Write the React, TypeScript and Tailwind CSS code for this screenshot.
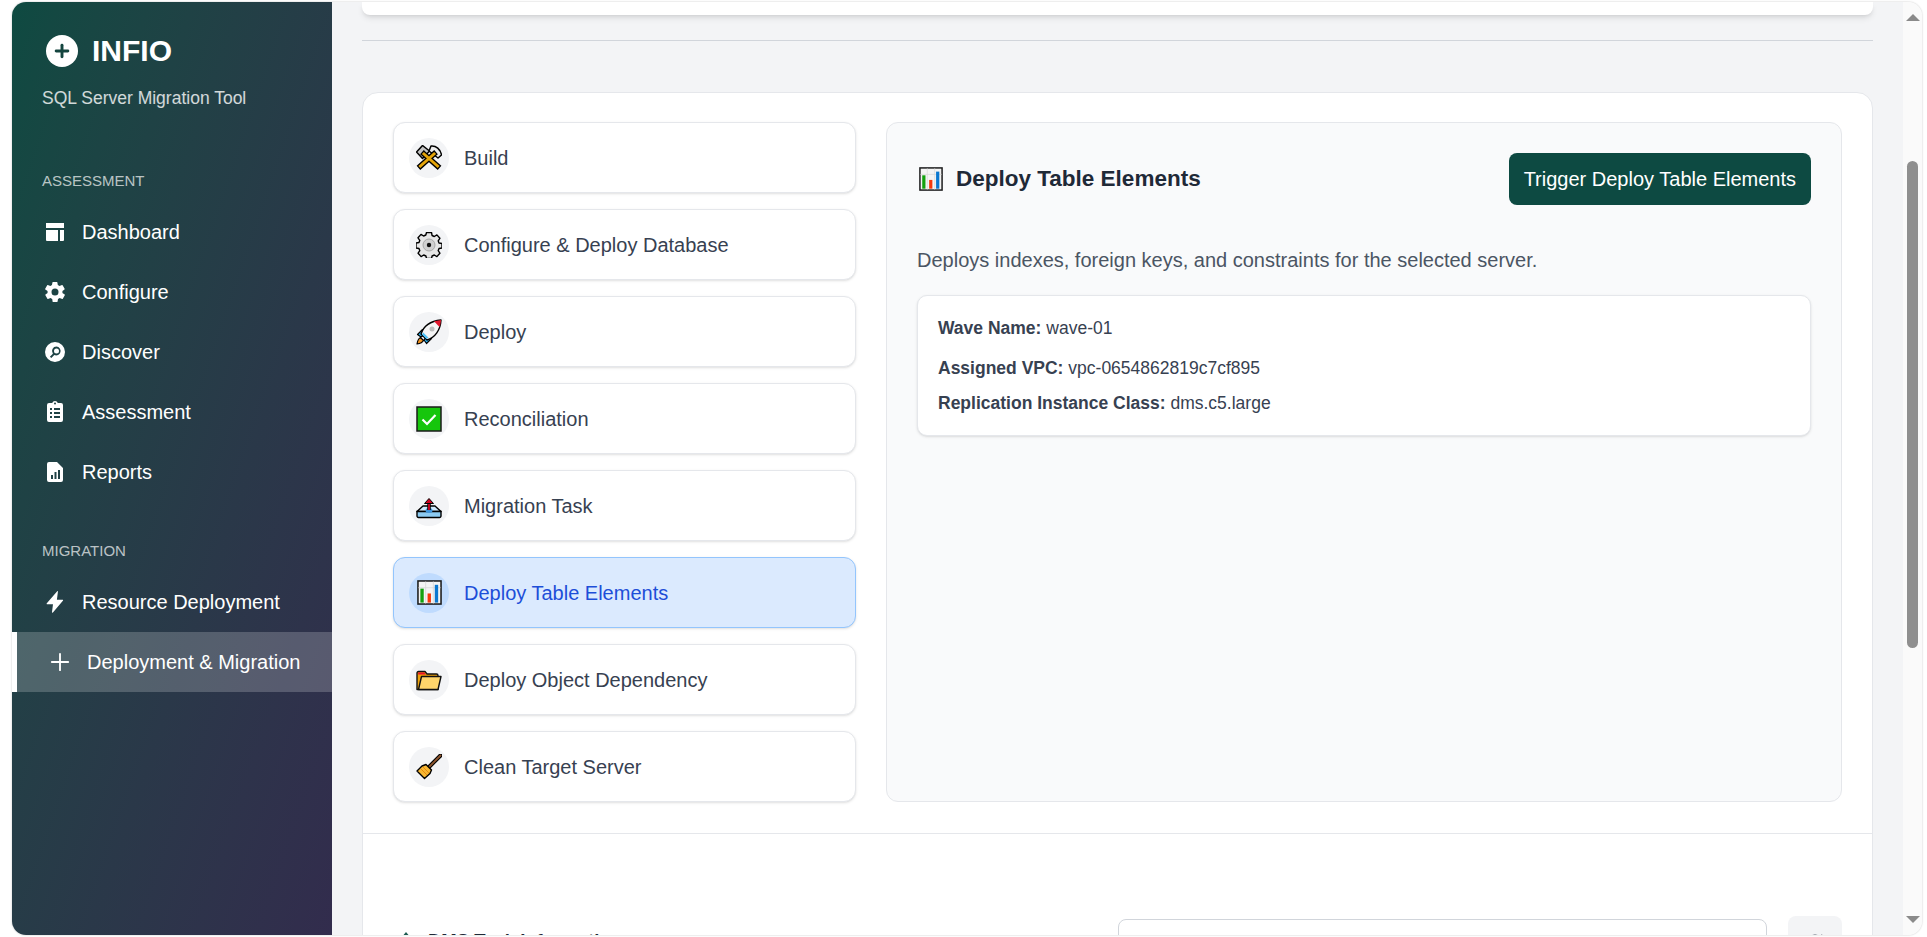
import { Plus, RefreshCw } from 'lucide-react';
import type { ReactNode } from 'react';

const sans = { fontFamily: '"Liberation Sans", Arial, sans-serif' };

function DashIcon() {
  return (
    <svg viewBox="0 0 24 24" className="h-6 w-6" fill="white">
      <path d="M3 3h18v5H3zM3 10h12v11H4a1 1 0 0 1-1-1zM17 10h4v10a1 1 0 0 1-1 1h-3z" />
    </svg>
  );
}

function GearIcon() {
  return (
    <svg viewBox="0 0 24 24" className="h-6 w-6" fill="white">
      <path fillRule="evenodd" d="M19.4 13a7.6 7.6 0 0 0 0-2l2.1-1.6a.5.5 0 0 0 .1-.7l-2-3.4a.5.5 0 0 0-.6-.2l-2.5 1a7.3 7.3 0 0 0-1.7-1l-.4-2.6a.5.5 0 0 0-.5-.5h-4a.5.5 0 0 0-.5.4l-.4 2.7a7.3 7.3 0 0 0-1.7 1l-2.5-1a.5.5 0 0 0-.6.2l-2 3.4a.5.5 0 0 0 .1.7L4.6 11a7.6 7.6 0 0 0 0 2l-2.1 1.6a.5.5 0 0 0-.1.7l2 3.4a.5.5 0 0 0 .6.2l2.5-1a7.3 7.3 0 0 0 1.7 1l.4 2.6a.5.5 0 0 0 .5.5h4a.5.5 0 0 0 .5-.4l.4-2.7a7.3 7.3 0 0 0 1.7-1l2.5 1a.5.5 0 0 0 .6-.2l2-3.4a.5.5 0 0 0-.1-.7zM12 15.5a3.5 3.5 0 1 1 0-7 3.5 3.5 0 0 1 0 7z" />
    </svg>
  );
}

function DiscoverIcon() {
  return (
    <svg viewBox="0 0 24 24" className="h-6 w-6" fill="white">
      <path fillRule="evenodd" d="M12 2a10 10 0 1 1 0 20 10 10 0 0 1 0-20zm1.5 4.5a4.5 4.5 0 0 0-3.6 7.2l-3 3 1.4 1.4 3-3a4.5 4.5 0 1 0 2.2-8.6zm0 2a2.5 2.5 0 1 1 0 5 2.5 2.5 0 0 1 0-5z" />
    </svg>
  );
}

function ClipboardIcon() {
  return (
    <svg viewBox="0 0 24 24" className="h-6 w-6" fill="white">
      <path fillRule="evenodd" d="M18 3h-3.200a3 3 0 0 0-5.600 0H6a2 2 0 0 0-2 2v15a2 2 0 0 0 2 2h12a2 2 0 0 0 2-2V5a2 2 0 0 0-2-2zm-6-.5a1 1 0 1 1 0 2 1 1 0 0 1 0-2zM7 8h2v2H7zm4 0h6v2h-6zm-4 4h2v2H7zm4 0h6v2h-6zm-4 4h2v2H7zm4 0h6v2h-6z" />
    </svg>
  );
}

function ReportIcon() {
  return (
    <svg viewBox="0 0 24 24" className="h-6 w-6" fill="white">
      <path fillRule="evenodd" d="M6 2h8l6 6v12a2 2 0 0 1-2 2H6a2 2 0 0 1-2-2V4a2 2 0 0 1 2-2zm2 13v4h2v-4zm3.500-3v7h2v-7zm3.500-2v9h2v-9z" />
    </svg>
  );
}

function BoltIcon() {
  return (
    <svg viewBox="0 0 24 24" className="h-6 w-6" fill="white">
      <path d="M14 1.500 3.800 13.200c-.4.500-.1 1 .5 1h5.700L9 22c-.1.700.5.900.9.400l10-11.600c.4-.5.100-1-.5-1h-5.500l1-8c.1-.7-.5-1-.9-.3z" />
    </svg>
  );
}

function BuildEmoji() {
  return (
    <svg viewBox="0 0 26 26" className="h-[26px] w-[26px]">
      <path d="M.5 7 6.500.5l7 5.500-7 7.500z" fill="#c4c4c4" stroke="#000" strokeWidth="1.500" strokeLinejoin="round" />
      <path d="M15 1c5-.5 9.500 3 10.500 9l-3.500 3-9-7z" fill="#eeeeee" stroke="#000" strokeWidth="1.500" strokeLinejoin="round" />
      <path d="M8 9 21.500 21" stroke="#000" strokeWidth="5.500" strokeLinecap="square" />
      <path d="M18 9 4.500 21" stroke="#000" strokeWidth="5.500" strokeLinecap="square" />
      <path d="M8 9 21.500 21" stroke="#e5a50a" strokeWidth="3" strokeLinecap="square" />
      <path d="M18 9 4.500 21" stroke="#e5a50a" strokeWidth="3" strokeLinecap="square" />
    </svg>
  );
}

function GearEmoji() {
  return (
    <svg viewBox="0 0 26 26" className="h-[26px] w-[26px]">
      <path d="M10.500 1h5l.6 3 2.200 1 2.600-1.600 3 3.400-1.700 2.500.8 2.200 3 .5v4.500l-3 .5-.8 2.200 1.700 2.500-3 3.400-2.600-1.600-2.200 1-.6 2.500h-5l-.6-2.500-2.200-1-2.600 1.600-3-3.400 1.700-2.500-.8-2.200-3-.5V11.500l3-.5.800-2.200L2 6.300l3-3.400L7.600 4.500l2.200-1z" transform="translate(0 -.5)" fill="#e6e6e6" stroke="#000" strokeWidth="1.400" strokeLinejoin="round" />
      <circle cx="13" cy="13" r="6" fill="#d0d0d0" stroke="#a8a8a8" />
      <circle cx="13" cy="13" r="2.200" fill="#111" />
    </svg>
  );
}

function RocketEmoji() {
  return (
    <svg viewBox="0 0 26 26" className="h-[26px] w-[26px]">
      <path d="M1 25c.5-3 1.500-5.500 3.500-6.500l3 3C6.500 23.500 4 24.500 1 25z" fill="#f7941d" stroke="#000" strokeWidth="1.200" strokeLinejoin="round" />
      <path d="M6.500 10.500 1.500 15.500l3.500 2.500 3-2zM15.500 19.500l-5 5-2.500-3.500 2-3z" fill="#29b6f6" stroke="#000" strokeWidth="1.200" strokeLinejoin="round" />
      <path d="M5 15C7.500 7 15 2 25 1c-.5 10-6 17.500-14 20z" fill="#f5f5f5" stroke="#000" strokeWidth="1.400" strokeLinejoin="round" />
      <path d="M18 2.300 25 1c-.2 2.500-.7 5-1.500 7z" fill="#e0162b" />
      <path d="m6 15.500 4.500 4.500 2-1.200-5.300-5.300z" fill="#4fc3f7" />
      <circle cx="16" cy="10" r="2.500" fill="#bdbdbd" />
    </svg>
  );
}

function CheckEmoji() {
  return (
    <svg viewBox="0 0 26 26" className="h-[26px] w-[26px]">
      <rect x="1" y="1" width="24" height="24" fill="#16c60c" stroke="#1a1a1a" strokeWidth="1.500" />
      <path d="m6.500 13.500 4.500 4.500 8.500-9" fill="none" stroke="#fff" strokeWidth="2.200" />
    </svg>
  );
}

function OutboxEmoji() {
  return (
    <svg viewBox="0 0 26 26" className="h-[26px] w-[26px]">
      <path d="M7 13h12l6 5.500H1z" fill="#cfe8fa" stroke="#000" strokeWidth="1.400" strokeLinejoin="round" />
      <path d="M1 18.500h24V23a1.500 1.500 0 0 1-1.500 1.500h-21A1.500 1.500 0 0 1 1 23z" fill="#8ccbf2" stroke="#000" strokeWidth="1.400" />
      <ellipse cx="13" cy="17.500" rx="3.500" ry="2.500" fill="#3f95dc" />
      <path d="M13 17V10" stroke="#000" strokeWidth="3.500" />
      <path d="M13 17V10" stroke="#d2001e" strokeWidth="1.800" />
      <path d="m13 5.500 4.500 5h-9z" fill="#d2001e" stroke="#000" strokeWidth="1" />
    </svg>
  );
}

function ChartEmoji({ small }: { small?: boolean }) {
  return (
    <svg viewBox="0 0 26 26" className={small ? 'h-6 w-6' : 'h-[25px] w-[25px]'}>
      <rect x="1" y="1" width="24" height="24" fill="#f4f4f4" stroke="#1a1a1a" strokeWidth="1.600" />
      <path d="M1.500 8h23M9 1.500v23M17 1.500v23" stroke="#d8d8d8" strokeWidth=".8" />
      <rect x="3.500" y="9" width="3.500" height="14.500" fill="#13a10e" />
      <rect x="11" y="14" width="3.500" height="9.500" fill="#f7390b" />
      <rect x="18.500" y="5" width="3.500" height="18.500" fill="#0b78d0" />
    </svg>
  );
}

function FolderEmoji() {
  return (
    <svg viewBox="0 0 26 26" className="h-[26px] w-[26px]">
      <path d="M1 6a1.500 1.500 0 0 1 1.500-1.500h6.500l2 2.500h9.500a1.500 1.500 0 0 1 1.500 1.500V22.500H1z" fill="#f0a30a" stroke="#111" strokeWidth="1.400" strokeLinejoin="round" />
      <path d="M2.200 5.500h6.300l1.300 2H2.200z" fill="#e8112d" />
      <path d="M5.500 9.500H25l-3 13H2.500z" fill="#ffd56b" stroke="#111" strokeWidth="1.400" strokeLinejoin="round" />
    </svg>
  );
}

function BroomEmoji() {
  return (
    <svg viewBox="0 0 26 26" className="h-[26px] w-[26px]">
      <path d="M24.500 1.500 13 13" stroke="#000" strokeWidth="4" strokeLinecap="round" />
      <path d="M24.500 1.500 13 13" stroke="#8e562e" strokeWidth="1.800" strokeLinecap="round" />
      <path d="m10 10.500 5.500 5.500-1.500 3.500L8.500 24.500 1 17l5-5z" fill="#f7b733" stroke="#000" strokeWidth="1.400" strokeLinejoin="round" />
      <path d="m7 13 6 6M5 15l6 6" stroke="#e8890c" strokeWidth="1" />
    </svg>
  );
}

const assessmentLinks: { label: string; icon: ReactNode }[] = [
  { label: 'Dashboard', icon: <DashIcon /> },
  { label: 'Configure', icon: <GearIcon /> },
  { label: 'Discover', icon: <DiscoverIcon /> },
  { label: 'Assessment', icon: <ClipboardIcon /> },
  { label: 'Reports', icon: <ReportIcon /> },
];

const steps: { label: string; icon: ReactNode; active?: boolean }[] = [
  { label: 'Build', icon: <BuildEmoji /> },
  { label: 'Configure & Deploy Database', icon: <GearEmoji /> },
  { label: 'Deploy', icon: <RocketEmoji /> },
  { label: 'Reconciliation', icon: <CheckEmoji /> },
  { label: 'Migration Task', icon: <OutboxEmoji /> },
  { label: 'Deploy Table Elements', icon: <ChartEmoji />, active: true },
  { label: 'Deploy Object Dependency', icon: <FolderEmoji /> },
  { label: 'Clean Target Server', icon: <BroomEmoji /> },
];

function SideLink({ label, icon }: { label: string; icon: ReactNode }) {
  return (
    <div className="flex h-[60px] items-center gap-[15px] pl-[31px] text-[20px] text-white">
      <span className="flex w-[24px] justify-center">{icon}</span>
      {label}
    </div>
  );
}

function Sidebar() {
  return (
    <aside className="flex h-full w-[320px] shrink-0 flex-col rounded-l-[14px] bg-gradient-to-br from-[#0e4a41] to-[#322c4d]">
      <div className="px-[30px] pt-[32px]">
        <div className="flex items-center gap-[14px] pl-[4px]">
          <span className="flex h-[32px] w-[32px] items-center justify-center rounded-full bg-white">
            <Plus size={20} strokeWidth={3.5} color="#14453f" />
          </span>
          <span className="text-[30px] leading-[34px] font-bold text-white">INFIO</span>
        </div>
        <p className="mt-[18px] text-[17.500px] leading-[24px] text-white/80">SQL Server Migration Tool</p>
      </div>
      <p className="mt-[61px] pl-[30px] text-[15px] leading-[20px] text-white/70">ASSESSMENT</p>
      <nav className="mt-[11px]">
        {assessmentLinks.map((link) => (
          <SideLink key={link.label} {...link} />
        ))}
      </nav>
      <p className="mt-[39px] pl-[30px] text-[15px] leading-[20px] text-white/70">MIGRATION</p>
      <nav className="mt-[11px]">
        <SideLink label="Resource Deployment" icon={<BoltIcon />} />
        <div className="flex h-[60px] items-center gap-[15px] border-l-[5px] border-white bg-white/20 pl-[31px] text-[20px] text-white">
          <span className="flex w-[24px] justify-center">
            <Plus size={28} strokeWidth={1.6} className="shrink-0" />
          </span>
          Deployment &amp; Migration
        </div>
      </nav>
    </aside>
  );
}

function StepButton({ label, icon, active }: { label: string; icon: ReactNode; active?: boolean }) {
  return (
    <button
      className={
        active
          ? 'flex h-[71px] items-center gap-[15px] rounded-[12px] border border-[#93c5fd] bg-[#dbeafe] px-[15px] text-left text-[20px] text-[#1d4ed8] shadow-sm'
          : 'flex h-[71px] items-center gap-[15px] rounded-[12px] border border-[#e5e7eb] bg-white px-[15px] text-left text-[20px] text-[#374151] shadow-sm'
      }
    >
      <span
        className={
          active
            ? 'flex h-[40px] w-[40px] items-center justify-center rounded-full bg-[#bfdbfe]'
            : 'flex h-[40px] w-[40px] items-center justify-center rounded-full bg-[#f3f4f6]'
        }
      >
        {icon}
      </span>
      {label}
    </button>
  );
}

function DetailPanel() {
  return (
    <section className="flex-1 rounded-[12px] border border-[#e5e7eb] bg-[#f9fafb] px-[30px] pt-[30px]">
      <div className="flex items-center justify-between">
        <h2 className="flex items-center gap-[13px] pl-[2px] text-[22.500px] font-bold text-[#1f2937]">
          <ChartEmoji small />
          Deploy Table Elements
        </h2>
        <button className="h-[52px] rounded-[8px] bg-[#0d4a42] px-[15px] text-[20px] text-white">
          Trigger Deploy Table Elements
        </button>
      </div>
      <p className="mt-[43px] text-[20px] leading-[24px] text-[#4b5563]">
        Deploys indexes, foreign keys, and constraints for the selected server.
      </p>
      <div className="mt-[23px] h-[141px] rounded-[10px] border border-[#e5e7eb] bg-white px-[20px] pt-[20px] text-[17.500px] text-[#374151] shadow-sm">
        <p className="leading-[24px]">
          <strong>Wave Name:</strong> wave-01
        </p>
        <p className="mt-[16px] leading-[24px]">
          <strong>Assigned VPC:</strong> vpc-0654862819c7cf895
        </p>
        <p className="mt-[11px] leading-[24px]">
          <strong>Replication Instance Class:</strong> dms.c5.large
        </p>
      </div>
    </section>
  );
}

function ScrollBar() {
  return (
    <div className="flex h-full w-[19px] shrink-0 flex-col items-center rounded-r-[14px] bg-[#fafafa] pt-[12px]">
      <span className="h-0 w-0 border-x-[7px] border-b-[7px] border-x-transparent border-b-[#8a8a8a]" />
      <span className="mt-[140px] h-[487px] w-[11px] rounded-full bg-[#8f8f8f]" />
      <span className="mt-auto mb-[12px] h-0 w-0 border-x-[7px] border-t-[7px] border-x-transparent border-t-[#8a8a8a]" />
    </div>
  );
}

export default function App() {
  return (
    <div className="h-[937px] w-full overflow-hidden bg-white pt-[2px] pb-[2px] pl-[12px] pr-[5px]" style={sans}>
      <div className="flex h-full rounded-[14px] shadow-[0_0_2px_rgba(0,0,0,0.25)]">
        <Sidebar />
        <main className="min-w-0 flex-1 overflow-hidden bg-[#f3f4f6] px-[30px]">
          <div className="h-[13px] rounded-b-[8px] bg-white shadow-md" />
          <hr className="mt-[25px] border-[#d1d5db]" />
          <div className="mt-[51px] rounded-[16px] border border-[#e5e7eb] bg-white pt-[29px] pb-[100px]">
            <div className="flex h-[680px] gap-[30px] px-[30px]">
              <div className="flex w-[463px] shrink-0 flex-col gap-[16px]">
                {steps.map((step) => (
                  <StepButton key={step.label} {...step} />
                ))}
              </div>
              <DetailPanel />
            </div>
            <div className="mt-[31px] border-t border-[#e5e7eb] px-[30px] pt-[82px]">
              <div className="flex items-start justify-between">
                <h3 className="ml-[6px] flex items-start gap-[11px] pt-[11px] text-[18.500px] font-bold text-[#1f2937]">
                  <svg viewBox="0 0 18 18" className="mt-[5px] h-[18px] w-[18px]" fill="#1d5c52">
                    <path d="M7 0l5 6-2 0v6H4V6H2z" />
                  </svg>
                  DMS Task Information
                </h3>
                <div className="flex items-start gap-[21px]">
                  <input className="mt-[3px] h-[44px] w-[649px] rounded-[8px] border border-[#d1d5db] bg-white" />
                  <button className="flex h-[52px] w-[54px] items-center justify-center rounded-[8px] bg-[#f3f4f6] text-[#4b5563]">
                    <RefreshCw size={18} />
                  </button>
                </div>
              </div>
            </div>
          </div>
        </main>
        <ScrollBar />
      </div>
    </div>
  );
}
